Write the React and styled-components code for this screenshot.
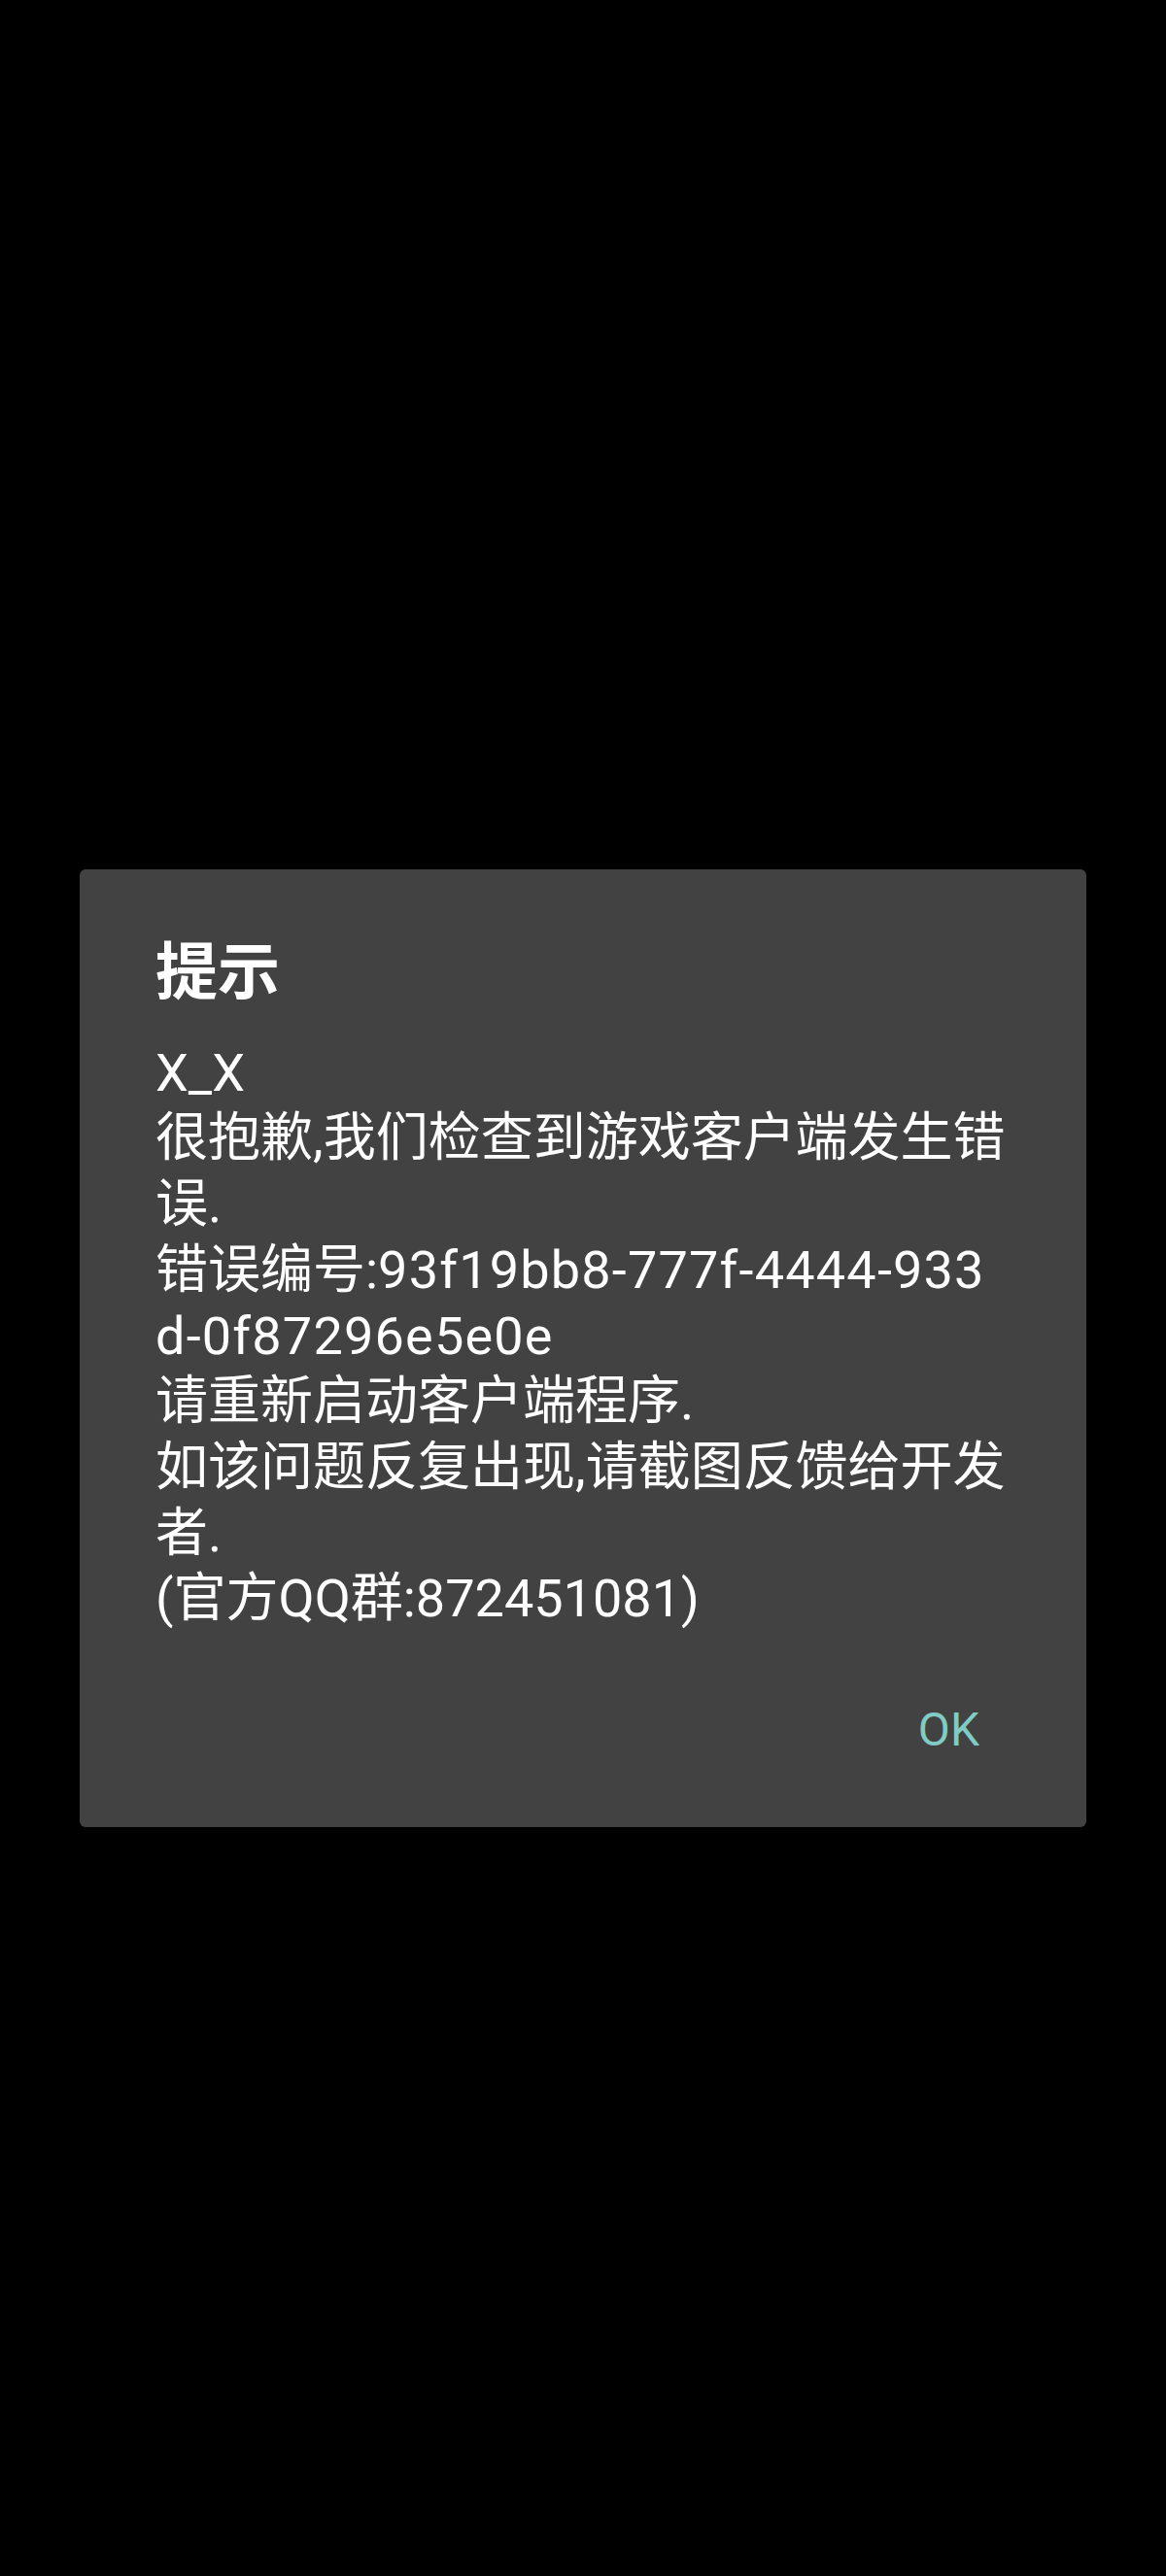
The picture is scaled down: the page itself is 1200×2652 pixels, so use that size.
import React from 'react';
import styled, { createGlobalStyle } from 'styled-components';

const GlobalStyle = createGlobalStyle`
  html, body {
    margin: 0;
    padding: 0;
    background: #000;
  }
  * {
    box-sizing: border-box;
  }
`;

const Screen = styled.div`
  width: 1200px;
  min-height: 2652px;
  background: #000;
  padding: 895px 82px 0;
  font-family: Roboto, "Noto Sans CJK SC", "Noto Sans", sans-serif;
`;

const Dialog = styled.section`
  background: #424242;
  border-radius: 6px;
  color: #fff;
`;

const Body = styled.div`
  padding: 67px 78px 0;
`;

const Title = styled.h2`
  margin: 0 0 28.7px;
  font-size: 64px;
  line-height: 80px;
  font-weight: 700;
`;

const Message = styled.div`
  font-size: 54px;
  line-height: 67.7px;
  font-weight: 400;
`;

const Line = styled.div`
  white-space: nowrap;
`;

const Code = styled.span`
  letter-spacing: 1.2px;
`;

const Actions = styled.div`
  display: flex;
  justify-content: flex-end;
  padding: 72.6px 78px 72.4px;
`;

const TextButton = styled.button`
  background: none;
  border: none;
  padding: 0 32px;
  height: 56px;
  font-family: Roboto, sans-serif;
  font-size: 48px;
  line-height: 56px;
  font-weight: 400;
  color: #80cbc4;
  cursor: pointer;
`;

export default function App() {
  return (
    <>
      <GlobalStyle />
      <Screen>
        <Dialog>
          <Body>
            <Title>提示</Title>
            <Message>
              <Line>X_X</Line>
              <Line>很抱歉,我们检查到游戏客户端发生错</Line>
              <Line>误.</Line>
              <Line>错误编号:<Code>93f19bb8-777f-4444-933</Code></Line>
              <Line><Code>d-0f87296e5e0e</Code></Line>
              <Line>请重新启动客户端程序.</Line>
              <Line>如该问题反复出现,请截图反馈给开发</Line>
              <Line>者.</Line>
              <Line>(官方QQ群:872451081)</Line>
            </Message>
          </Body>
          <Actions>
            <TextButton>OK</TextButton>
          </Actions>
        </Dialog>
      </Screen>
    </>
  );
}
